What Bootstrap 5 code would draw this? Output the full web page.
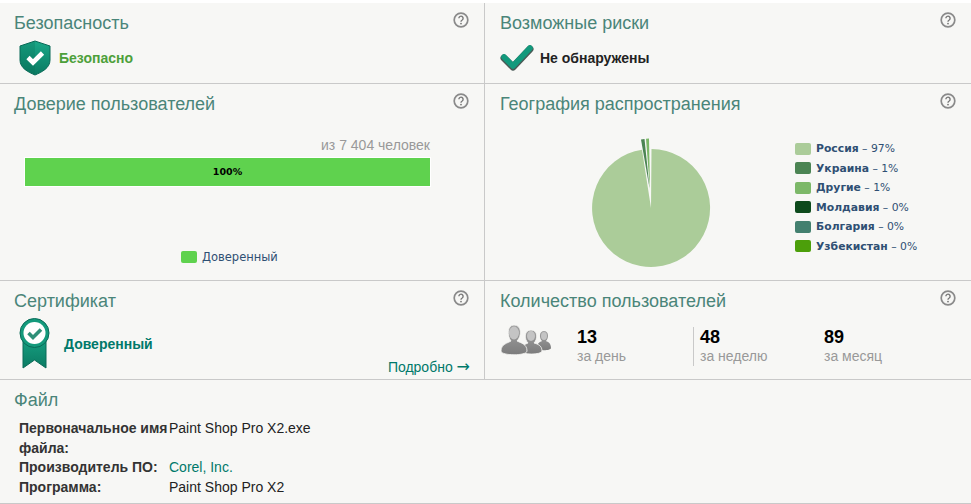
<!DOCTYPE html>
<html lang="ru">
<head>
    <meta charset="UTF-8">
    <meta name="viewport" content="width=device-width, initial-scale=1">
    <title>Файл</title>
    <link href="https://cdn.jsdelivr.net/npm/bootstrap@5.3.0/dist/css/bootstrap.min.css" rel="stylesheet">
    <style>
        body { background: #fff; font-family: "Liberation Sans", Arial, sans-serif; font-size: 14px; color: #222; padding-top: 3px; }
        .info-row { background: #f7f7f5; border-bottom: 1px solid #c9c9c9; }
        .row-a { height: 81px; }
        .row-b { height: 197px; }
        .row-c { height: 99px; }
        .row-d { height: 124px; padding: 10px 14px 0; }
        .info-cell { width: 485px; border-right: 1px solid #c9c9c9; padding: 10px 14px 0; flex: none; }
        .info-cell-r { flex: 1; padding: 10px 14px 0 15px; min-width: 0; }
        .info-head { display: flex; justify-content: space-between; align-items: flex-start; height: 21px; }
        .info-title { font-size: 18px; line-height: 21px; color: #4a8579; margin: 0; font-weight: 400; }
        .help-ic { width: 16px; height: 16px; margin: -1px 1px 0 0; display: block; }
        .status-line { display: flex; align-items: center; font-weight: 700; font-size: 14px; }
        .st-safe { margin-top: 6px; }
        .st-risk { margin-top: 11px; }
        .st-cert { margin-top: 6px; }
        .shield-ic { margin: 0 7px 0 4px; }
        .tick-ic { margin-right: 6px; }
        .ribbon-ic { margin: 0 14px 0 4px; }
        .txt-safe { color: #4da03a; }
        .txt-trust { color: #00796a; }
        .of-people { color: #999; font-size: 14px; text-align: right; line-height: 16px; padding-top: 22px; width: 416px; }
        .trust-bar { width: 405px; height: 28px; margin: 5px 0 0 11px; background: #5fd24e; font: 700 9.5px/28px "DejaVu Sans", sans-serif; color: #000; text-align: center; box-shadow: 0 0 0 1px #fff; }
        .chart-key { font: 11.5px/16px "DejaVu Sans", sans-serif; color: #2f4f73; }
        .key-box { width: 16px; height: 12px; border-radius: 2px; display: inline-block; flex: none; }
        .trust-key { gap: 5px; margin: 63px 0 0 167px; }
        .geo-body { display: flex; margin-top: 4px; }
        .geo-pie { width: 140px; height: 140px; margin: 19px 0 0 82px; flex: none; display: block; }
        .geo-keys { margin: 20px 0 0 73px; font: 10.8px/19.5px "DejaVu Sans", sans-serif; color: #2f4f73; }
        .geo-keys > div { display: flex; align-items: center; gap: 5px; white-space: nowrap; }
        .c-trust { background: #5fd24e; }
        .c-ru { background: #abcc99; }
        .c-ua { background: #4b8453; }
        .c-other { background: #7cb868; }
        .c-md { background: #0d4a1c; }
        .c-bg { background: #43806f; }
        .c-uz { background: #4c9f0a; }
        .more-link { color: #00796a; text-decoration: none; font-size: 14px; position: absolute; right: 14px; bottom: 1px; }
        .more-link span { font-family: "DejaVu Sans", sans-serif; font-size: 16px; line-height: 14px; }
        .cert-cell { position: relative; }
        .users-body { display: flex; margin-top: 15px; }
        .users-ic { width: 50px; height: 33px; margin: -3px 26px 0 1px; flex: none; }
        .users-stat { width: 124px; line-height: 19px; }
        .users-stat b { font-size: 18px; color: #000; display: block; line-height: 20px; }
        .users-stat span { color: #999; font-size: 14px; }
        .users-stat.sep { width: 131px; border-left: 1px solid #c9c9c9; padding-left: 6px; margin-left: -8px; }
        .file-tbl { margin: 8px 0 0 5px; width: 320px; line-height: 19.5px; }
        .file-tbl .k { width: 150px; font-weight: 700; color: #333; flex: none; }
        .file-tbl a { color: #00796a; text-decoration: none; }
    </style>
</head>
<body>
    <svg width="0" height="0" class="d-block">
        <defs>
            <linearGradient id="tealFill" x1="0" y1="0" x2="0" y2="1">
                <stop offset="0" stop-color="#1aa888"/>
                <stop offset="1" stop-color="#0a7a62"/>
            </linearGradient>
            <linearGradient id="greyFill" x1="0" y1="0" x2="0" y2="1">
                <stop offset="0" stop-color="#a2a2a2"/>
                <stop offset="1" stop-color="#7c7c7c"/>
            </linearGradient>
            <symbol id="helpMark" viewBox="0 0 16 16">
                <circle cx="8" cy="8" r="6.8" fill="#f7f7f5" stroke="#8a8a8a" stroke-width="1.7"/>
                <path d="M5.9 6.3a2.1 2.1 0 1 1 3.3 1.7c-.8.5-1.2.9-1.2 1.7" fill="none" stroke="#777" stroke-width="1.4"/>
                <circle cx="8" cy="11.6" r=".9" fill="#777"/>
            </symbol>
        </defs>
    </svg>

    <div class="info-row row-a d-flex">
        <div class="info-cell">
            <div class="info-head">
                <h2 class="info-title">Безопасность</h2>
                <svg class="help-ic"><use href="#helpMark"/></svg>
            </div>
            <div class="status-line st-safe">
                <svg width="34" height="36" viewBox="0 0 34 36" class="shield-ic">
                    <path d="M17 1 L32 6 V20 C32 28 24 32 17 35 C10 32 2 28 2 20 V6 Z" fill="url(#tealFill)" stroke="#0a6a58" stroke-width="1"/>
                    <path d="M17 35 C10 32 2 28 2 20 V6 L17 1 Z" fill="#066b55" opacity=".25"/>
                    <path d="M10 17.5 L15 22.5 L24.5 13" fill="none" stroke="#fff" stroke-width="4.6"/>
                </svg>
                <span class="txt-safe">Безопасно</span>
            </div>
        </div>
        <div class="info-cell-r">
            <div class="info-head">
                <h2 class="info-title">Возможные риски</h2>
                <svg class="help-ic"><use href="#helpMark"/></svg>
            </div>
            <div class="status-line st-risk">
                <svg width="34" height="26" viewBox="0 0 34 26" class="tick-ic">
                    <path d="M4 13 L13 22 L30 4" fill="none" stroke="#4a5a56" stroke-width="7" stroke-linecap="round" stroke-linejoin="round"/>
                    <path d="M4 12 L13 21 L30 3" fill="none" stroke="#12997c" stroke-width="5.5" stroke-linecap="round" stroke-linejoin="round"/>
                </svg>
                <span>Не обнаружены</span>
            </div>
        </div>
    </div>

    <div class="info-row row-b d-flex">
        <div class="info-cell">
            <div class="info-head">
                <h2 class="info-title">Доверие пользователей</h2>
                <svg class="help-ic"><use href="#helpMark"/></svg>
            </div>
            <div class="of-people">из 7 404 человек</div>
            <div class="trust-bar">100%</div>
            <div class="chart-key trust-key d-flex align-items-center">
                <span class="key-box c-trust"></span><span>Доверенный</span>
            </div>
        </div>
        <div class="info-cell-r">
            <div class="info-head">
                <h2 class="info-title">География распространения</h2>
                <svg class="help-ic"><use href="#helpMark"/></svg>
            </div>
            <div class="geo-body">
                <svg class="geo-pie" viewBox="0 0 140 140">
                    <path d="M69 70 L69.5 11 A59 59 0 1 1 60 11.7 Z" fill="#abcc99"/>
                    <path d="M67.5 50 L59 1.4 L62.5 1 Z" fill="#4b8453"/>
                    <path d="M68 52 L64 .8 L67 .5 Z" fill="#7cb868"/>
                </svg>
                <div class="geo-keys">
                    <div><span class="key-box c-ru"></span><span><b>Россия</b> – 97%</span></div>
                    <div><span class="key-box c-ua"></span><span><b>Украина</b> – 1%</span></div>
                    <div><span class="key-box c-other"></span><span><b>Другие</b> – 1%</span></div>
                    <div><span class="key-box c-md"></span><span><b>Молдавия</b> – 0%</span></div>
                    <div><span class="key-box c-bg"></span><span><b>Болгария</b> – 0%</span></div>
                    <div><span class="key-box c-uz"></span><span><b>Узбекистан</b> – 0%</span></div>
                </div>
            </div>
        </div>
    </div>

    <div class="info-row row-c d-flex">
        <div class="info-cell cert-cell">
            <div class="info-head">
                <h2 class="info-title">Сертификат</h2>
                <svg class="help-ic"><use href="#helpMark"/></svg>
            </div>
            <div class="status-line st-cert">
                <svg width="32" height="52" viewBox="0 0 32 52" class="ribbon-ic">
                    <path d="M5 14 V50 L16.5 42 L28 50 V14 Z" fill="url(#tealFill)" stroke="#0a6a58"/>
                    <circle cx="16.5" cy="15" r="14.5" fill="#149a7c" stroke="#0a6a58"/>
                    <circle cx="16.5" cy="15" r="11" fill="#fff"/>
                    <path d="M10.5 15 L15 19.5 L23 11.5" fill="none" stroke="#2f8f78" stroke-width="3.6"/>
                </svg>
                <span class="txt-trust">Доверенный</span>
            </div>
            <a href="#" class="more-link">Подробно <span>→</span></a>
        </div>
        <div class="info-cell-r">
            <div class="info-head">
                <h2 class="info-title">Количество пользователей</h2>
                <svg class="help-ic"><use href="#helpMark"/></svg>
            </div>
            <div class="users-body">
                <svg class="users-ic" viewBox="0 0 50 33">
                    <g fill="url(#greyFill)">
                        <path d="M36 24 C36 19 39 18 41 17 C38 14 38 7 43 7 C48 7 48 14 45 17 C47 18 50 19 50 24 C50 27 36 27 36 24 Z"/>
                        <path d="M20 27 C20 21 25 20 27 19 C23 15 23 6 30 6 C37 6 37 15 33 19 C36 20 41 21 41 27 C41 31 20 31 20 27 Z" stroke="#f7f7f5" stroke-width=".8"/>
                        <path d="M0 27 C0 20 7 19 10 17 C6 12 6 1 13 1 C21 1 21 12 16 17 C20 19 26 20 26 27 C26 32 0 32 0 27 Z" stroke="#f7f7f5" stroke-width=".8"/>
                    </g>
                    <g fill="#c4c4c4">
                        <ellipse cx="43" cy="12" rx="3" ry="4"/>
                        <ellipse cx="30" cy="12" rx="4" ry="5"/>
                        <ellipse cx="13" cy="9" rx="5" ry="6.5"/>
                    </g>
                </svg>
                <div class="users-stat"><b>13</b><span>за день</span></div>
                <div class="users-stat sep"><b>48</b><span>за неделю</span></div>
                <div class="users-stat"><b>89</b><span>за месяц</span></div>
            </div>
        </div>
    </div>

    <div class="info-row row-d">
        <h2 class="info-title">Файл</h2>
        <div class="file-tbl">
            <div class="d-flex"><div class="k">Первоначальное имя файла:</div><div>Paint Shop Pro X2.exe</div></div>
            <div class="d-flex"><div class="k">Производитель ПО:</div><div><a href="#">Corel, Inc.</a></div></div>
            <div class="d-flex"><div class="k">Программа:</div><div>Paint Shop Pro X2</div></div>
        </div>
    </div>

    <script src="https://cdn.jsdelivr.net/npm/bootstrap@5.3.0/dist/js/bootstrap.bundle.min.js"></script>
</body>
</html>
